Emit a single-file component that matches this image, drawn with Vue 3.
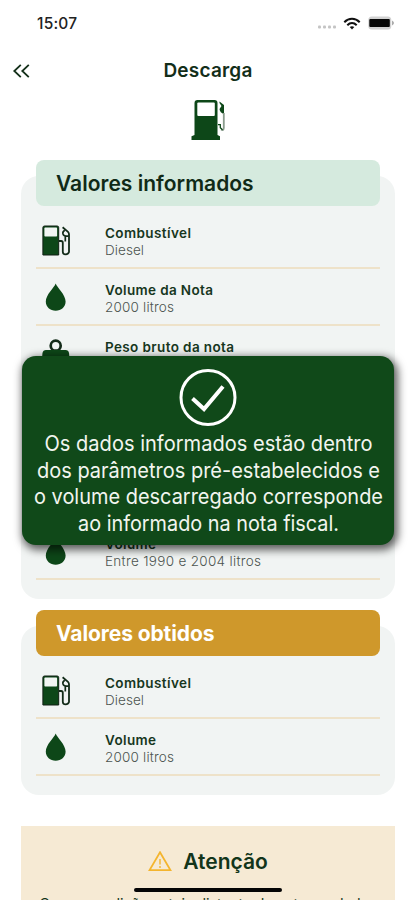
<script setup>
const informed = [
  { icon: 'pump', label: 'Combustível', value: 'Diesel', lw: 86, vw: 39 },
  { icon: 'drop', label: 'Volume da Nota', value: '2000 litros', lw: 108, vw: 69 },
  { icon: 'weight', label: 'Peso bruto da nota', value: '1700 kg', lw: 129, vw: 48 },
  { icon: 'drop', label: 'Volume', value: 'Entre 1990 e 2004 litros', lw: 51, vw: 156, last: true },
]
const obtained = [
  { icon: 'pump', label: 'Combustível', value: 'Diesel', lw: 86, vw: 39 },
  { icon: 'drop', label: 'Volume', value: '2000 litros', lw: 51, vw: 69 },
]
const groups = [
  { title: 'Valores informados', tone: 'mint', rows: informed },
  { title: 'Valores obtidos', tone: 'gold', rows: obtained },
]
const message = [
  { text: 'Os dados informados estão dentro', width: 328 },
  { text: 'dos parâmetros pré-estabelecidos e', width: 343 },
  { text: 'o volume descarregado corresponde', width: 349 },
  { text: 'ao informado na nota fiscal.', width: 261 },
]
</script>

<template>
  <main class="screen">
    <div class="status">
      <span class="time">15:07</span>
      <div class="signals">
        <svg class="dots" width="20" height="4" viewBox="0 0 20 4" fill="#c4c4c4">
          <rect x="1" y="0.5" width="3" height="3" rx="1" /><rect x="6" y="0.5" width="3" height="3" rx="1" />
          <rect x="11" y="0.5" width="3" height="3" rx="1" /><rect x="16" y="0.5" width="3" height="3" rx="1" />
        </svg>
        <svg width="18" height="13" viewBox="0 0 18 13" fill="none" stroke="#111" stroke-width="2">
          <path d="M1.3 5.2C5.8 .6 12.2 .6 16.7 5.2M4.3 8.2c2.8-2.8 6.6-2.8 9.4 0" />
          <path d="M9 12.5 6.7 10.1q2.3-1.9 4.6 0Z" fill="#111" stroke="none" />
        </svg>
        <svg width="27" height="14" viewBox="0 0 27 14">
          <rect x=".3" y=".5" width="23" height="13" rx="3.5" fill="#d2d2d2" />
          <rect x="1.3" y="3" width="20.5" height="8" rx="1" fill="#080808" />
          <path d="M24 4.5q4 2.5 0 5Z" fill="#aaa" />
        </svg>
      </div>
    </div>

    <header class="nav">
      <svg width="18" height="14" viewBox="0 0 18 14" fill="none" stroke="#14301a" stroke-width="1.8">
        <path d="M8.8.8 2.3 7l6.5 6.2M16.8.8 10.3 7l6.5 6.2" />
      </svg>
      <h1>Descarga</h1>
    </header>

    <div class="hero">
      <svg width="38" height="42" viewBox="0 0 38 42">
        <path d="M3.5 36V4q0-3 3-3h17q3 0 3 3v32l2.5 1.2V41H.5v-3.8Z" fill="#0d4718" />
        <rect x="6.3" y="3.5" width="17.5" height="13.5" rx="1" fill="#fff" />
        <path d="M28.5 2.5 33 6v9q-4-1-4.5-5l2-3-2-3Z" fill="#0d4718" />
        <path d="M32.8 14v15q-.3 3-2.7 1.5" fill="none" stroke="#8a9c8d" stroke-width="1.8" />
        <path d="M27 25.7h2.3v3l2.2 2" fill="none" stroke="#0d4718" stroke-width="1.3" />
      </svg>
    </div>

    <section v-for="g in groups" :key="g.title" class="group" :class="g.tone">
      <h2><span>{{ g.title }}</span></h2>
      <div class="panel">
        <div v-for="r in g.rows" :key="r.label" class="row" :class="{ final: r.last }">
          <div class="icon">
            <svg v-if="r.icon === 'pump'" width="29" height="31" viewBox="0 0 29 31">
              <path d="M.9 30V2.6Q.9 1 2.5 1h12.6q1.6 0 1.6 1.6V30Z" fill="#0d4718" stroke="#101f13" stroke-width="1" />
              <rect x="2.4" y="2.6" width="12.7" height="9" rx=".8" fill="#f2f5f3" />
              <path d="M17 16h2.1q1.7 0 1.7 1.8V27q.2 2.4 2.8 2.4T27 27V9.2q0-1.4-1-2.4l-5.4-4.5" fill="none" stroke="#122b18" stroke-width="1.8" />
              <path d="M22.8 5.2q-2.5 1.3-1.8 3.8.8 2.2 3.3 2.2h2.4M23.3 11.2v5.3" fill="none" stroke="#122b18" stroke-width="1.7" />
            </svg>
            <svg v-else-if="r.icon === 'drop'" width="29" height="31" viewBox="0 0 29 31">
              <path d="M13.7 1.6C12.3 5.6 3.8 12.8 3.8 19.6c0 5.4 4.4 9.2 9.9 9.2s9.9-3.8 9.9-9.2C23.6 12.8 15.1 5.6 13.7 1.6Z" fill="#0d4718" />
            </svg>
            <svg v-else width="29" height="31" viewBox="0 0 29 31">
              <circle cx="13.7" cy="6.7" r="5" fill="none" stroke="#142b19" stroke-width="2.7" />
              <path d="M4 11h19.5q3 0 3.5 3l1.5 16H-1l1.5-16q.5-3 3.5-3Z" fill="#0d4718" />
            </svg>
          </div>
          <svg class="copy" width="270" height="38" viewBox="0 0 270 38">
            <text class="label" x="0" y="14.7" :textLength="r.lw">{{ r.label }}</text>
            <text class="value" x="0" y="32" :textLength="r.vw">{{ r.value }}</text>
          </svg>
        </div>
      </div>
    </section>

    <section class="warning">
      <div class="warnhead">
        <svg width="24" height="21" viewBox="0 0 24 21" fill="none" stroke="#f4b52e" stroke-width="1.8">
          <path d="M12 1.3 22.4 19.1H1.6Z" /><path d="M12 8v5.5M12 15v2" stroke-width="1.4" />
        </svg>
        <h3>Atenção</h3>
      </div>
      <p>Caso a medição esteja distante da nota, os dados</p>
    </section>

    <div class="modal">
      <svg width="58" height="58" viewBox="0 0 58 58" fill="none" stroke="#fff">
        <circle cx="29" cy="28.5" r="27" stroke-width="3" />
        <path d="m13.5 29.5 11.5 10.5L44 17.5" stroke-width="4" />
      </svg>
      <div class="message">
        <svg v-for="line in message" :key="line.text" width="372" height="26.7">
          <text :x="186.5 - line.width / 2" y="21" :textLength="line.width" lengthAdjust="spacingAndGlyphs">{{ line.text }}</text>
        </svg>
      </div>
    </div>
    <div class="home"></div>
  </main>
</template>

<style>
body { background: #fff; }
</style>
<style scoped>
* { box-sizing: border-box; margin: 0; }
.screen { position: relative; width: 415px; height: 900px; overflow: hidden; background: #fff; font-family: Inter, "Liberation Sans", sans-serif; color: #12351a; }
svg { display: block; flex: none; }
.status { height: 46px; padding: 0 20px 0 37px; display: flex; align-items: center; justify-content: space-between; }
.time { font-size: 15.5px; font-weight: 500; letter-spacing: .2px; color: #222; }
.signals { display: flex; align-items: center; gap: 7px; }
.dots { margin-top: 8px; margin-right: -1px; }
.nav { height: 48px; padding: 1px 12px 0; display: flex; align-items: center; }
.nav h1 { flex: 1; text-align: center; font-size: 19px; font-weight: 600; line-height: 24px; padding: 1px 17px 0 0; color: #132e19; letter-spacing: .2px; }
.hero { height: 66px; padding: 5px 0 0 191px; }
.group { padding: 0 20px 0 21px; }
.group h2 { position: relative; margin: 0 15px; height: 46px; padding-left: 20px; border-radius: 8px; font-size: 21px; font-weight: 600; line-height: 47px; white-space: nowrap; }
.mint h2 { background: #d5eade; color: #102a17; letter-spacing: .02px; }
.gold h2 { background: #cf982b; color: #fff; font-weight: 700; letter-spacing: -.1px; }
.panel { margin-top: -30px; padding: 36px 15px 20px; background: #f1f4f3; border-radius: 18px; }
.mint .panel { height: 423px; }
.gold .panel { height: 169px; }
.gold { margin-top: 11px; }
.row { height: 57px; display: flex; border-bottom: 2px solid #eee2c9; }
.row.final { margin-top: 140px; }
.icon { width: 69px; padding: 13px 0 0 6px; }
.copy { margin-top: 11px; }
.label { font-size: 13.5px; font-weight: 600; fill: #17371e; }
.value { font-size: 13.5px; font-weight: 300; fill: #4d5550; }
.warning { margin: 31px 20px 0 21px; height: 150px; padding-top: 22px; background: #f6ead4; }
.warnhead { display: flex; align-items: center; justify-content: center; gap: 11px; height: 27px; }
.warnhead h3 { font-size: 21px; font-weight: 600; }
.warning p { margin-top: 19px; text-align: center; font-size: 14.4px; line-height: 20px; white-space: nowrap; }
.modal { position: absolute; left: 22px; top: 356px; width: 372px; height: 189px; padding-top: 13px; display: flex; flex-direction: column; align-items: center; border-radius: 14px; background: #104919; box-shadow: 2px 3px 9px 2px rgba(0,0,0,.62); }
.message { margin-top: 3px; font-size: 21.5px; fill: #f2f5ef; }
.home { position: absolute; left: 134px; top: 888px; width: 148px; height: 4px; border-radius: 2px; background: #050505; }
</style>
